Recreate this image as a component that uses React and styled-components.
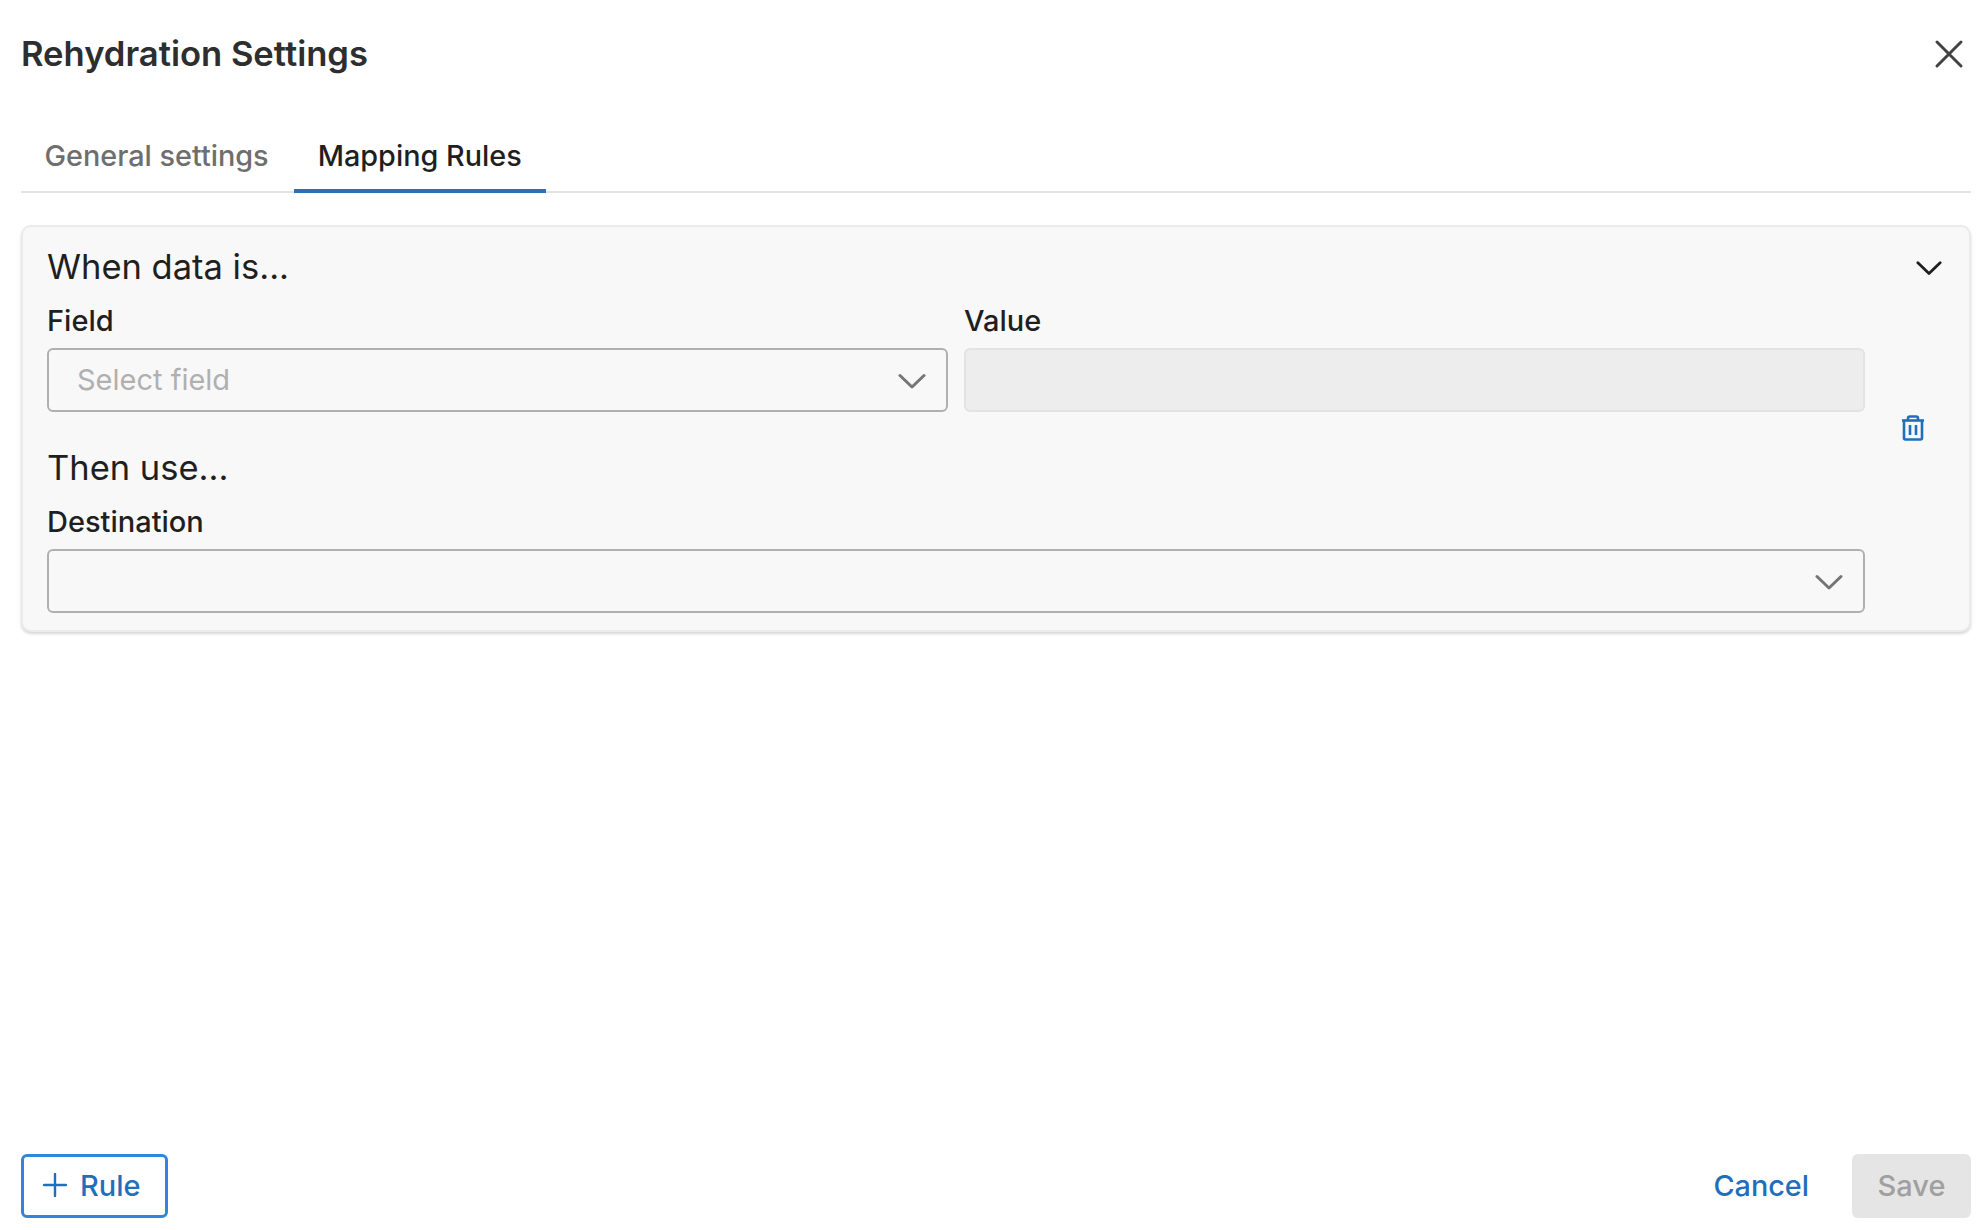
import styled, { createGlobalStyle } from 'styled-components';

const GlobalStyle = createGlobalStyle`
  html, body {
    margin: 0;
    padding: 0;
    background: #fff;
    font-family: Inter, "Liberation Sans", sans-serif;
  }
  * {
    box-sizing: border-box;
  }
`;

const ChevronIcon = ({ size = 28, color = '#757575', width = 3 }) => (
  <svg width={size} height={size} viewBox="0 0 28 28" fill="none">
    <path d="M2 9.5 L14 21 L26 9.5" stroke={color} strokeWidth={width} strokeLinecap="round" strokeLinejoin="round" />
  </svg>
);

const CloseIcon = () => (
  <svg width="30" height="30" viewBox="0 0 30 30" fill="none">
    <path d="M3 3 L27 27 M27 3 L3 27" stroke="#424242" strokeWidth="3" strokeLinecap="round" />
  </svg>
);

const TrashIcon = () => (
  <svg width="24" height="26" viewBox="0 0 24 26" fill="none" stroke="#1f6fbd" strokeWidth="2.6">
    <path d="M1 5.5 H23" />
    <path d="M3 5.5 V23 a1.5 1.5 0 0 0 1.5 1.5 H19.5 a1.5 1.5 0 0 0 1.5 -1.5 V5.5" />
    <path d="M7 5 V3.5 a2 2 0 0 1 2 -2 H15 a2 2 0 0 1 2 2 V5" />
    <path d="M9 10 V20 M15 10 V20" />
  </svg>
);

const PlusIcon = () => (
  <svg width="24" height="24" viewBox="0 0 24 24" fill="none">
    <path d="M12 1 V23 M1 12 H23" stroke="#1f6fbd" strokeWidth="2.4" strokeLinecap="round" />
  </svg>
);

export default function App() {
  return (
    <Page>
      <GlobalStyle />
      <Header>
        <Title>Rehydration Settings</Title>
        <IconButton aria-label="Close">
          <CloseIcon />
        </IconButton>
      </Header>

      <Tabs>
        <Tab>General settings</Tab>
        <Tab $active>Mapping Rules</Tab>
      </Tabs>

      <Card>
        <CardTop>
          <SectionTitle>When data is...</SectionTitle>
          <CollapseButton aria-label="Collapse">
            <ChevronIcon size={26} color="#1f1f1f" />
          </CollapseButton>
        </CardTop>
        <CardBody>
          <Fields>
            <FieldRow>
              <Field>
                <Label>Field</Label>
                <Select>
                  <Placeholder>Select field</Placeholder>
                  <ChevronIcon />
                </Select>
              </Field>
              <Field>
                <Label>Value</Label>
                <DisabledInput />
              </Field>
            </FieldRow>
            <SectionTitle $spaced>Then use...</SectionTitle>
            <Field>
              <Label>Destination</Label>
              <Select>
                <Placeholder />
                <ChevronIcon />
              </Select>
            </Field>
          </Fields>
          <DeleteButton aria-label="Delete rule">
            <TrashIcon />
          </DeleteButton>
        </CardBody>
      </Card>

      <Footer>
        <AddButton>
          <PlusIcon />
          Rule
        </AddButton>
        <Actions>
          <CancelButton>Cancel</CancelButton>
          <SaveButton disabled>Save</SaveButton>
        </Actions>
      </Footer>
    </Page>
  );
}

const Page = styled.div`
  width: 1984px;
  height: 1230px;
  padding: 0 13px 12px 21px;
  display: flex;
  flex-direction: column;
  overflow: hidden;
  background: #fff;
`;

const Header = styled.div`
  display: flex;
  justify-content: space-between;
  align-items: center;
  height: 108px;
  padding: 0 7px 2px 0;
`;

const Title = styled.h1`
  margin: 0;
  font-size: 34.6px;
  font-weight: 600;
  color: #2e2e2e;
`;

const IconButton = styled.button`
  display: flex;
  margin-top: 2px;
  border: 0;
  padding: 0;
  background: none;
`;

const Tabs = styled.div`
  display: flex;
  gap: 1px;
  height: 85px;
  border-bottom: 2px solid #e3e3e3;
`;

const Tab = styled.div`
  display: flex;
  align-items: center;
  height: 85px;
  padding: 13px 24.5px 0 23.5px;
  font-size: 28.8px;
  font-weight: 500;
  color: ${(p) => (p.$active ? '#1f1f1f' : '#6e6e6e')};
  border-bottom: 4px solid ${(p) => (p.$active ? '#2a71bb' : 'transparent')};
`;

const Card = styled.section`
  margin-top: 32px;
  height: 407px;
  padding: 18px 27px 0 24px;
  background: #f8f8f8;
  border: 2px solid #ebebeb;
  border-radius: 10px;
  box-shadow: 0 2px 3px rgba(0, 0, 0, 0.16);
`;

const CardTop = styled.div`
  display: flex;
  justify-content: space-between;
  align-items: center;
  height: 44px;
`;

const SectionTitle = styled.h2`
  margin: ${(p) => (p.$spaced ? '34px 0 0' : '0')};
  font-size: 34.5px;
  line-height: 44px;
  font-weight: 400;
  color: #1f1f1f;
`;

const CollapseButton = styled.button`
  display: flex;
  border: 0;
  padding: 0;
  background: none;
`;

const CardBody = styled.div`
  display: flex;
  align-items: center;
`;

const Fields = styled.div`
  flex: 0 0 1818px;
`;

const FieldRow = styled.div`
  display: grid;
  grid-template-columns: 901px 901px;
  gap: 16px;
`;

const Field = styled.div`
  display: flex;
  flex-direction: column;
`;

const Label = styled.label`
  margin-top: 13px;
  margin-bottom: 8px;
  font-size: 29px;
  line-height: 38px;
  font-weight: 500;
  color: #1f1f1f;
`;

const Select = styled.div`
  display: flex;
  justify-content: space-between;
  align-items: center;
  height: 64px;
  padding: 0 20px 0 28px;
  border: 2px solid #b0b0b0;
  border-radius: 6px;
`;

const Placeholder = styled.span`
  padding-bottom: 2px;
  font-size: 29px;
  color: #b0b0b0;
`;

const DisabledInput = styled.div`
  height: 64px;
  background: #ededed;
  border: 2px solid #e3e3e3;
  border-radius: 6px;
`;

const DeleteButton = styled.button`
  display: flex;
  margin: -46px 0 0 36px;
  border: 0;
  padding: 0;
  background: none;
`;

const Footer = styled.div`
  margin-top: auto;
  display: flex;
  justify-content: space-between;
  align-items: center;
`;

const AddButton = styled.button`
  display: flex;
  align-items: center;
  gap: 13px;
  height: 64px;
  width: 147px;
  padding: 0 19px 2px;
  background: #fff;
  border: 3px solid #2f86dc;
  border-radius: 6px;
  font: 500 29px Inter, sans-serif;
  color: #1f6fbd;
`;

const Actions = styled.div`
  display: flex;
  align-items: center;
  gap: 43px;
`;

const CancelButton = styled.button`
  border: 0;
  padding: 0 0 2px;
  background: none;
  font: 500 28.8px Inter, sans-serif;
  color: #1f6fbd;
`;

const SaveButton = styled.button`
  width: 119px;
  height: 64px;
  padding: 0 0 2px;
  border: 0;
  border-radius: 6px;
  background: #e5e5e5;
  font: 500 29px Inter, sans-serif;
  color: #a0a0a0;
`;
